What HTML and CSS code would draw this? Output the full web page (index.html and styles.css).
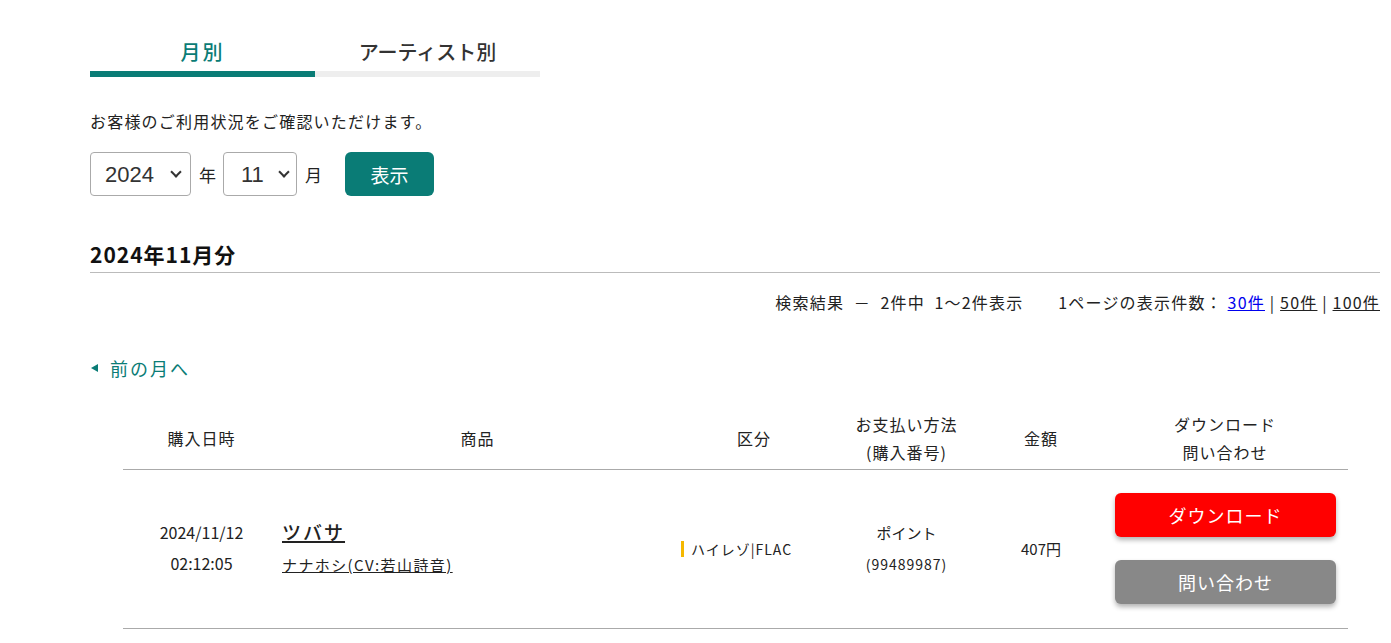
FILE: index.html
```html
<!DOCTYPE html>
<html lang="ja">
<head>
    <meta charset="UTF-8">
    <title>購入履歴</title>
    <link rel="stylesheet" href="styles.css">
</head>
<body>

    <div class="container">
        <div class="tabs">
            <div class="tab active">月別</div>
            <div class="tab">アーティスト別</div>
        </div>

        <p class="lead">お客様のご利用状況をご確認いただけます。</p>

        <form class="period">
            <span class="select year">
                <select>
                    <option>2024</option>
                </select>
            </span>
            <span class="unit">年</span>
            <span class="select month">
                <select>
                    <option>11</option>
                </select>
            </span>
            <span class="unit">月</span>
            <button type="button" class="show">表示</button>
        </form>

        <h2 class="heading">2024年11月分</h2>

        <div class="result">
            <span>検索結果 &nbsp;－ &nbsp;2件中 &nbsp;1～2件表示</span>
            <span class="per-page">1ページの表示件数：
                <a href="#" class="current">30件</a> | <a href="#">50件</a> | <a href="#">100件</a>
            </span>
        </div>

        <a href="#" class="prev"><span class="arrow"></span>前の月へ</a>

        <table class="history">
            <thead>
                <tr>
                    <th class="c-date">購入日時</th>
                    <th class="c-item">商品</th>
                    <th class="c-type">区分</th>
                    <th class="c-pay">お支払い方法<br>(購入番号)</th>
                    <th class="c-price">金額</th>
                    <th class="c-dl">ダウンロード<br>問い合わせ</th>
                </tr>
            </thead>
            <tbody>
                <tr>
                    <td class="c-date">2024/11/12<br>02:12:05</td>
                    <td class="c-item">
                        <a href="#" class="title">ツバサ</a><br>
                        <a href="#" class="artist">ナナホシ(CV:若山詩音)</a>
                    </td>
                    <td class="c-type"><span class="format">ハイレゾ|FLAC</span></td>
                    <td class="c-pay">ポイント<br><span class="order">(99489987)</span></td>
                    <td class="c-price">407円</td>
                    <td class="c-dl">
                        <button class="btn download">ダウンロード</button>
                        <button class="btn inquiry">問い合わせ</button>
                    </td>
                </tr>
            </tbody>
        </table>
    </div>

</body>
</html>
```

FILE: styles.css
```css
* {
    margin: 0;
    padding: 0;
    box-sizing: border-box;
    font-family: "Noto Sans CJK JP", "Noto Sans", sans-serif;
}

body {
    background: #fff;
    color: #222;
}

.container {
    width: 1290px;
    margin-left: 90px;
    padding-top: 33px;
}

.tabs {
    display: flex;
}

.tab {
    width: 225px;
    height: 44px;
    line-height: 38px;
    text-align: center;
    font-size: 20px;
    font-weight: 500;
    color: #333;
    border-bottom: 6px solid #eeeeee;
}

.tab.active {
    color: #0a7c76;
    letter-spacing: 2px;
    border-bottom-color: #0a7c76;
}

.lead {
    margin-top: 32px;
    font-size: 16px;
    line-height: 24px;
    letter-spacing: 1.2px;
}

.period {
    display: flex;
    align-items: center;
    margin-top: 19px;
    height: 44px;
}

.select {
    position: relative;
    display: block;
    height: 44px;
}

.select::after {
    content: "";
    position: absolute;
    top: 16px;
    width: 6px;
    height: 6px;
    border-right: 2px solid #333;
    border-bottom: 2px solid #333;
    transform: rotate(45deg);
    pointer-events: none;
}

.year { width: 101px; }
.year::after { right: 11px; }
.month { width: 74px; }
.month::after { right: 9px; }

select {
    appearance: none;
    width: 100%;
    height: 44px;
    border: 1px solid #aaa;
    border-radius: 4px;
    background: #fff;
    font-size: 22px;
    color: #333;
    padding-left: 14px;
    font-family: "Liberation Sans", sans-serif;
}

.month select {
    padding-left: 17px;
}

.unit {
    font-size: 17px;
    margin: 0 7px 0 8px;
}

.show {
    margin-left: 16px;
    width: 89px;
    height: 44px;
    border: none;
    border-radius: 6px;
    background: #0a7c76;
    color: #fff;
    font-size: 19px;
    cursor: pointer;
}

.heading {
    margin-top: 43px;
    font-size: 21px;
    line-height: 30px;
    font-weight: 700;
    letter-spacing: 1px;
    color: #111;
    padding-bottom: 3px;
    border-bottom: 1px solid #bbb;
}

.result {
    margin-top: 17px;
    text-align: right;
    font-size: 16px;
    line-height: 24px;
    letter-spacing: 1.2px;
    color: #222;
}

.per-page {
    margin-left: 30px;
}

.result a {
    color: #222;
}

.result a.current {
    color: #0000ee;
}

.prev {
    display: inline-flex;
    align-items: center;
    margin-top: 42px;
    font-size: 18px;
    line-height: 24px;
    letter-spacing: 2px;
    color: #0a7c76;
    text-decoration: none;
}

.arrow {
    width: 0;
    height: 0;
    border-top: 4px solid transparent;
    border-bottom: 4px solid transparent;
    border-right: 7px solid #0a7c76;
    margin: 0 12px 0 1px;
}

.history {
    margin: 30px 0 0 33px;
    width: 1225px;
    border-collapse: collapse;
    font-size: 16px;
}

.history th {
    font-weight: 400;
    line-height: 28px;
    height: 59px;
    text-align: center;
    letter-spacing: 1px;
    border-bottom: 1px solid #aaa;
    padding-bottom: 2px;
}

.history td {
    height: 159px;
    text-align: center;
    vertical-align: middle;
    border-bottom: 1px solid #aaa;
    font-size: 15px;
    line-height: 31px;
    padding-bottom: 1px;
}

.c-date { width: 157px; }
.c-item { width: 395px; }
.c-type { width: 158px; }
.c-pay { width: 147px; }
.c-price { width: 122px; }

.history td.c-date {
    font-size: 16px;
}

.history td.c-item {
    text-align: left;
    padding-left: 2px;
}

.title {
    font-size: 19px;
    font-weight: 500;
    letter-spacing: 2px;
    color: #222;
    text-decoration-thickness: 2px;
}

.artist {
    color: #222;
    letter-spacing: 1.4px;
}

.history td.c-type {
    text-align: left;
    padding-left: 6px;
}

.format {
    border-left: 3px solid #f5b800;
    padding-left: 7px;
    font-size: 14px;
    line-height: 16px;
    letter-spacing: 1px;
    display: inline-block;
}

.order {
    font-size: 14px;
    letter-spacing: 1px;
}

.history td.c-dl {
    padding: 0 12px 0 13px;
}

.btn {
    display: block;
    width: 221px;
    height: 44px;
    border: none;
    border-radius: 6px;
    color: #fff;
    font-size: 18px;
    letter-spacing: 1px;
    box-shadow: 0 3px 5px rgba(0, 0, 0, 0.3);
    cursor: pointer;
}

.download { background: #ff0000; }

.inquiry {
    background: #888888;
    margin-top: 23px;
}
```
